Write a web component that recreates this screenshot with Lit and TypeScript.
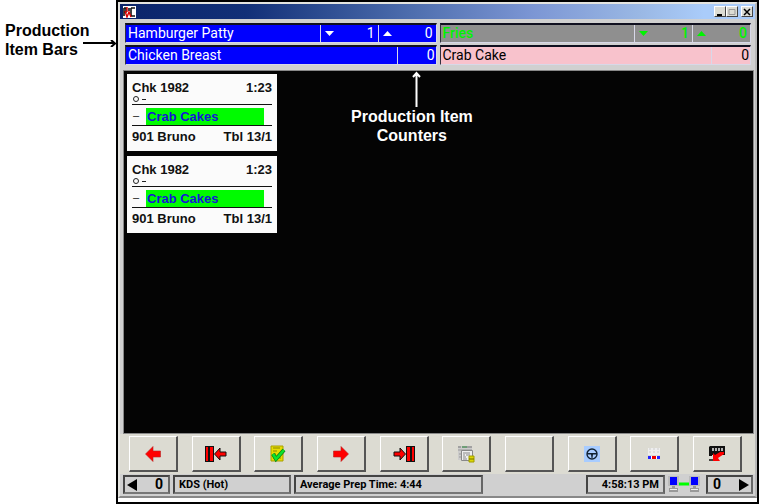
import { LitElement, html, svg, css, nothing } from "lit";
import { customElement, property } from "lit/decorators.js";
import { classMap } from "lit/directives/class-map.js";

const icon = (w: number, h: number, label: string, body: unknown) => html`<svg
  width=${w} height=${h} viewBox="0 0 ${w} ${h}" role="img" aria-label=${label}>${body}</svg>`;

const icons = {
  app: icon(13, 12, "KDS", svg`<rect width="13" height="12" fill="#fff"/>
    <path d="M1 2v8M1 2h2v4H1M8 2h4M8 2v8h4M6 2v3" stroke="#111" stroke-width="1.6" fill="none"/>
    <path d="M2 5l2 6 2-5 2 5M4 1v5" stroke="#d00" stroke-width="1.4" fill="none"/>`),
  prev: icon(16, 16, "Previous order", svg`<path d="M.5 8L8 .5V5h7.500v6H8v4.500z" fill="#f00" stroke="#b22" stroke-width=".6"/>`),
  next: icon(16, 16, "Next order", svg`<path d="M15.500 8L8 .5V5H.5v6H8v4.500z" fill="#f00" stroke="#b22" stroke-width=".6"/>`),
  first: icon(22, 16, "First page", svg`<path d="M0 0h9v16H0z" fill="#111"/><path d="M1 1h2v14H1zM5 1h3v14H5z" fill="#f00"/>
    <path d="M9.500 8L15 2v4h6v4h-6v4z" fill="#f00" stroke="#111"/>`),
  last: icon(22, 16, "Last page", svg`<path d="M13 0h9v16h-9z" fill="#111"/><path d="M19 1h2v14h-2zM14 1h3v14h-3z" fill="#f00"/>
    <path d="M12.500 8L7 2v4H1v4h6v4z" fill="#f00" stroke="#111"/>`),
  done: icon(16, 18, "Order done", svg`<path d="M1 1h12v15H1z" fill="#e6dc00" stroke="#a8a000"/>
    <path d="M3 3h7M3 6h4M3 9h3M3 13h8" stroke="#8c8600"/>
    <path d="M3 9l3 5 8-9" fill="none" stroke="#087a18" stroke-width="4"/>
    <path d="M3 9l3 5 8-9" fill="none" stroke="#0be32c" stroke-width="2.600"/>`),
  recall: icon(18, 18, "Recall order", svg`<path d="M1 1h14v14H1z" fill="#ccc"/><path d="M1 2h3M5 2h10" stroke="#777"/>
    <path d="M5 2h5" stroke="#3c9a4c"/><path d="M1 5h14M2 9h2M2 12h2" stroke="#999"/>
    <path d="M4.500 5.500h11v10h-11z" fill="#eee" stroke="#888"/><path d="M6 8h7M6 10h2M9 10h4M6 12h3M6 14h4" stroke="#888"/>
    <path d="M12 11h5v6h-5z" fill="#dcd800" stroke="#a09c00"/><path d="M12 14h5" stroke="#777000"/>`),
  wheel: icon(16, 16, "Chef functions", svg`<rect width="16" height="16" fill="#a8ccff"/>
    <circle cx="8" cy="8" r="5" fill="none" stroke="#123" stroke-width="1.400"/>
    <path d="M3 7h10v1.500H9L8.500 12h-1L7 8.500H3z" fill="#123"/>`),
  summary: icon(12, 12, "Item summary", svg`<path d="M0 0h12v7H0z" fill="#eee"/>
    <path d="M1 1h2M5 1h2M9 1h2M1 4h2M5 4h2M9 4h2" stroke="#ccc"/>
    <path d="M0 8h12v3H0z" fill="#fff"/><path d="M0 8h3v3H0z" fill="#22f"/><path d="M4 8h4v3H4z" fill="#e00"/><path d="M9 8h3v3H9z" fill="#22f"/>`),
  exit: icon(16, 16, "Sign out", svg`<path d="M0 1l1-1h15v9H3v1H0z" fill="#111"/>
    <path d="M4 2v3M7 2v3M10 2v3M13 2v3" stroke="#ddd" stroke-width="1.600"/>
    <path d="M0 14h6" stroke="#111" stroke-width="1.500"/><path d="M4 15V7l2 2 5-3h4v2l-6 4 2 3z" fill="#f00"/>`),
  network: icon(32, 17, "Network connected", svg`<path d="M10 8h12" stroke="#0f0" stroke-width="3"/>
    <g id="host"><path d="M0 0h11v10H0z" fill="#bbb"/><path d="M2 1h7v8H2z" fill="#00f"/>
    <path d="M4 10h3v2H4zM1 12h9v4H1z" fill="#999"/><path d="M2 13.500h7" stroke="#eee"/></g>
    <use href="#host" x="21"/>`),
};

const down = icon(9, 5, "Decrease", svg`<path d="M0 0h9L4.500 5z" fill="currentColor"/>`);
const up = icon(9, 5, "Increase", svg`<path d="M0 5h9L4.500 0z" fill="currentColor"/>`);

@customElement("item-bar")
export class ItemBar extends LitElement {
  @property() name = "";
  @property() tone = "blue";
  @property({ type: Number }) pending?: number;
  @property({ type: Number }) count = 0;

  static styles = css`
    :host { display: block; min-width: 0; }
    .bar {
      display: flex; height: 20px; box-sizing: border-box;
      border: 1px solid #d8d8e8; border-top: 2px solid #101020; border-left-color: #303040;
      font: 14px/17px Roboto, sans-serif;
    }
    .blue { background: #0000fe; color: #fff; }
    .grey { background: #8f8f8f; color: #00f400; font-weight: 500; }
    .pink { background: #f8c2cc; color: #000; }
    .name { flex: 1; padding-left: 2px; white-space: nowrap; }
    .cell {
      display: flex; align-items: center; justify-content: space-between;
      width: 58px; box-sizing: border-box; padding: 0 3px 0 4px; border-left: 1px solid #d8d8e8;
    }
    .small { width: 39px; padding-right: 1px; justify-content: flex-end; }
    button { display: flex; border: 0; padding: 0; background: none; color: inherit; }
  `;

  render() {
    const stepped = this.pending !== undefined;
    return html`<div class="bar ${this.tone}">
      <span class="name">${this.name}</span>
      ${stepped ? html`<span class="cell"><button>${down}</button>${this.pending}</span>` : nothing}
      <span class=${classMap({ cell: true, small: !stepped })}>
        ${stepped ? html`<button>${up}</button>` : nothing}${this.count}
      </span>
    </div>`;
  }
}

@customElement("order-ticket")
export class OrderTicket extends LitElement {
  @property() check = "";
  @property() time = "";
  @property() item = "";
  @property() server = "";
  @property() table = "";

  static styles = css`
    :host { display: block; }
    .ticket {
      width: 150px; height: 77px; box-sizing: border-box; padding: 6px 5px 0;
      background: #fbfbfb; color: #111; font: bold 13px/15px "Liberation Sans", sans-serif;
    }
    .row { display: flex; justify-content: space-between; white-space: nowrap; }
    .marks { display: block; height: 9px; }
    .order { display: flex; border: solid #111; border-width: 1px 0; height: 22px; box-sizing: border-box; padding-top: 3px; }
    .dash { width: 14px; text-indent: 1px; font-weight: normal; font-size: 11px; }
    .item { width: 118px; background: #00fb00; color: #1414d8; text-indent: 1px; line-height: 17px; }
    .foot { padding-top: 3px; }
  `;

  render() {
    return html`<article class="ticket">
      <div class="row"><span>${this.check}</span><span>${this.time}</span></div>
      <svg class="marks" width="20" height="9" aria-hidden="true">
        <circle cx="4" cy="4" r="2.500" fill="none" stroke="#222" /><path d="M10 4.500h4" stroke="#222" />
      </svg>
      <div class="order"><span class="dash">–</span><span class="item">${this.item}</span></div>
      <div class="row foot"><span>${this.server}</span><span>${this.table}</span></div>
    </article>`;
  }
}

@customElement("app-root")
export class AppRoot extends LitElement {
  static styles = css`
    :host { display: block; background: #fff; font-family: "Liberation Sans", sans-serif; }
    .page { display: flex; min-height: 100vh; }
    .note { margin: 0; font: bold 16px/19px "Liberation Sans", sans-serif; white-space: nowrap; }
    .aside { width: 116px; box-sizing: border-box; padding: 21px 0 0 5px; flex: none; }
    .line { display: flex; align-items: flex-start; gap: 5px; }
    .frame {
      flex: 1; min-width: 0; display: flex; flex-direction: column;
      border: 2px solid #000; padding-bottom: 4px;
    }
    .window {
      flex: 1; display: flex; flex-direction: column; background: #d0d0d0;
      border: 2px solid #e4e4e0; border-right-color: #b8b8b8; border-bottom-color: #888;
    }
    .title {
      display: flex; align-items: center; height: 15px; padding: 0 2px 0 3px;
      background: linear-gradient(90deg, #0a246a, #123078 20%, #4e6eae 46%, #7c96d4 65%, #9ab8e4 82%, #aaccfa 92%);
    }
    .title svg { display: block; }
    .grow { flex: 1; }
    .win {
      width: 12px; height: 11px; padding: 0; display: flex; align-items: center; justify-content: center;
      background: #dcdcd4; border: 1px solid; border-color: #fff #444 #444 #fff; box-sizing: border-box;
    }
    .close { margin-left: 3px; }
    .bars { display: grid; grid-template-columns: 1fr 1fr; gap: 2px 3px; padding: 4px 4px 5px 5px; }
    .board {
      position: relative; flex: 1; display: flex; flex-direction: column; align-items: flex-start; gap: 5px;
      margin: 0 1px 0 3px; padding: 3px; background: #040404; border: 1px solid #888;
    }
    .callout { position: absolute; left: 227px; top: 0; text-align: center; color: #fff; }
    .callout svg { display: block; margin: 0 auto; position: relative; left: 5px; }
    .tools { display: flex; justify-content: space-between; padding: 2px 13px 2px 9px; background: #dcdbd2; }
    .tool {
      width: 49px; height: 36px; padding: 0; display: flex; align-items: center; justify-content: center;
      background: #dcdbd2; border: solid; border-width: 1px 2px 2px 1px; border-color: #fff #555 #555 #fff;
    }
    .status {
      display: flex; gap: 3px; padding: 1px 2px 2px 3px; align-items: center;
      font: bold 11px/15px Roboto, sans-serif; white-space: nowrap;
    }
    .cell { box-sizing: border-box; height: 19px; border: 2px solid #666; border-color: #444 #666 #777 #444; padding: 0 4px; }
    .pager { display: flex; align-items: center; justify-content: space-between; width: 47px; padding: 0 5px 0 2px; font-size: 14px; }
    .next { padding: 0 2px 0 5px; margin-left: 3px; }
    .pager button { display: flex; padding: 0; border: 0; background: none; }
    .station { width: 118px; }
    .prep { width: 189px; }
    .clock { width: 79px; text-align: right; }
  `;

  private tools = [
    icons.prev, icons.first, icons.done, icons.next, icons.last,
    icons.recall, nothing, icons.wheel, icons.summary, icons.exit,
  ];

  render() {
    return html`<div class="page">
      <aside class="aside">
        <p class="note">Production</p>
        <div class="note line"><span>Item Bars</span>
          <svg width="33" height="7" aria-hidden="true"><path d="M0 3h32M28 0l4 3.500L28 7" fill="none" stroke="#000" stroke-width="2" /></svg>
        </div>
      </aside>
      <div class="frame"><main class="window">
        <header class="title">
          ${icons.app}<span class="grow"></span>
          <button class="win" aria-label="Minimize"><svg width="8" height="8"><path d="M1 7h5" stroke="#000" stroke-width="2" /></svg></button>
          <button class="win" aria-label="Maximize"><svg width="8" height="8"><path d="M1 1.500h6v5H1z" fill="none" stroke="#999" /></svg></button>
          <button class="win close" aria-label="Close"><svg width="8" height="8"><path d="M1 1l6 6M7 1L1 7" stroke="#000" stroke-width="1.500" /></svg></button>
        </header>
        <section class="bars">
          <item-bar name="Hamburger Patty" pending="1" count="0"></item-bar>
          <item-bar name="Fries" tone="grey" pending="1" count="0"></item-bar>
          <item-bar name="Chicken Breast" count="0"></item-bar>
          <item-bar name="Crab Cake" tone="pink" count="0"></item-bar>
        </section>
        <section class="board">
          ${[0, 1].map(() => html`<order-ticket check="Chk 1982" time="1:23" item="Crab Cakes" server="901 Bruno" table="Tbl 13/1"></order-ticket>`)}
          <div class="note callout">
            <svg width="9" height="36" aria-hidden="true"><path d="M4.500 36V2M1 6l3.500-4L8 6" fill="none" stroke="#fff" stroke-width="2" /></svg>
            Production Item<br />Counters
          </div>
        </section>
        <nav class="tools">${this.tools.map((t) => html`<button class="tool">${t}</button>`)}</nav>
        <footer class="status">
          <div class="cell pager">
            <button aria-label="Previous page"><svg width="10" height="12"><path d="M10 0v12L0 6z" /></svg></button>0
          </div>
          <div class="cell station">KDS (Hot)</div>
          <div class="cell prep">Average Prep Time: 4:44</div>
          <span class="grow"></span>
          <div class="cell clock">4:58:13 PM</div>
          ${icons.network}
          <div class="cell pager next">0
            <button aria-label="Next page"><svg width="10" height="12"><path d="M0 0v12l10-6z" /></svg></button>
          </div>
        </footer>
      </main></div>
    </div>`;
  }
}
